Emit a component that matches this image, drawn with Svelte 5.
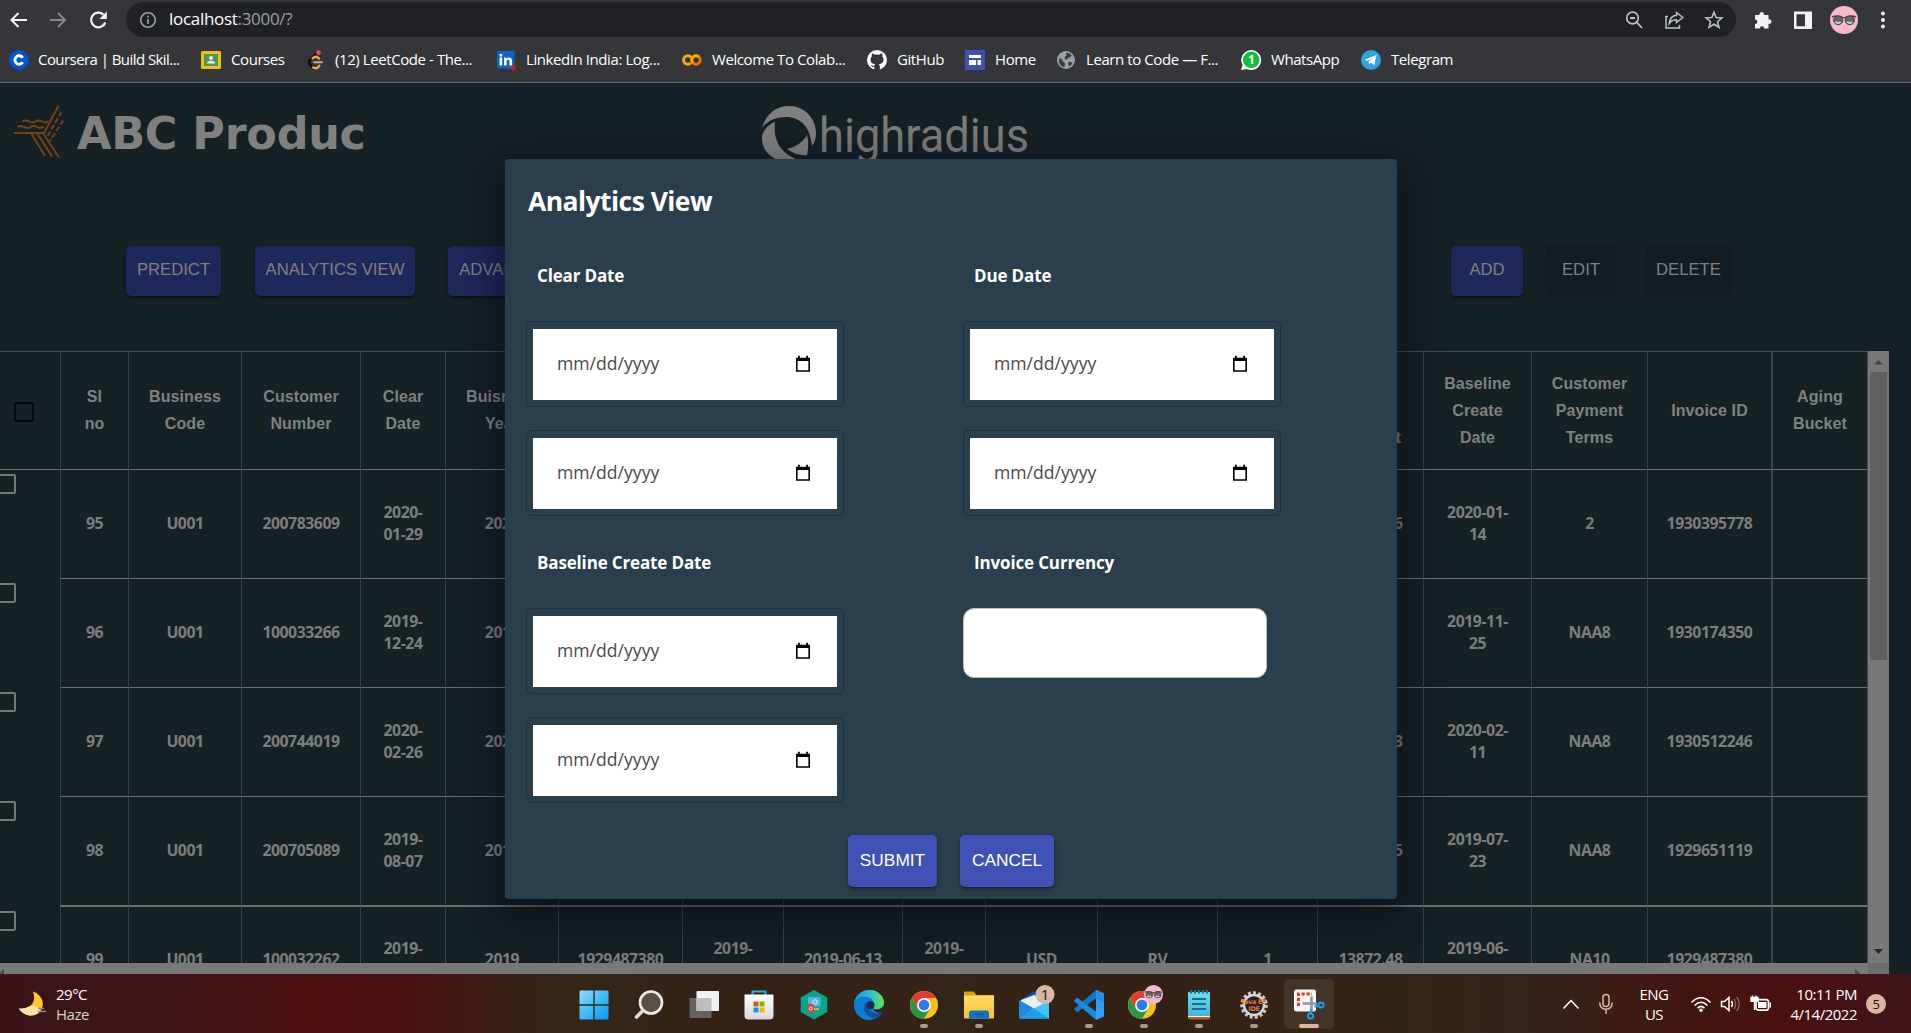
<script>
  const bookmarks = [
    { icon: 'coursera', label: 'Coursera | Build Skil...' },
    { icon: 'courses', label: 'Courses' },
    { icon: 'leetcode', label: '(12) LeetCode - The...' },
    { icon: 'linkedin', label: 'LinkedIn India: Log...' },
    { icon: 'colab', label: 'Welcome To Colab...' },
    { icon: 'github', label: 'GitHub' },
    { icon: 'home', label: 'Home' },
    { icon: 'globe', label: 'Learn to Code — F...' },
    { icon: 'whatsapp', label: 'WhatsApp' },
    { icon: 'telegram', label: 'Telegram' }
  ];

  const headers = [
    ['Sl', 'no'], ['Business', 'Code'], ['Customer', 'Number'], ['Clear', 'Date'],
    ['Buisness', 'Year'], ['Document', 'ID'], ['Posting', 'Date'], ['Document', 'Create', 'Date'],
    ['Due', 'Date'], ['Invoice', 'Currency'], ['Document', 'Type'], ['Posting', 'ID'],
    ['Total', 'Open', 'Amount'], ['Baseline', 'Create', 'Date'], ['Customer', 'Payment', 'Terms'],
    ['Invoice ID'], ['Aging', 'Bucket']
  ];

  const rows = [
    ['95', 'U001', '200783609', '2020-|01-29', '2020', '1930395778', '2020-|01-14', '2020-01-14', '2020-|01-29', 'USD', 'RV', '1', '54273.26', '2020-01-|14', '2', '1930395778', ''],
    ['96', 'U001', '100033266', '2019-|12-24', '2019', '1930174350', '2019-|11-25', '2019-11-25', '2019-|12-24', 'USD', 'RV', '1', '7196.41', '2019-11-|25', 'NAA8', '1930174350', ''],
    ['97', 'U001', '200744019', '2020-|02-26', '2020', '1930512246', '2020-|02-11', '2020-02-11', '2020-|02-26', 'USD', 'RV', '1', '16381.73', '2020-02-|11', 'NAA8', '1930512246', ''],
    ['98', 'U001', '200705089', '2019-|08-07', '2019', '1929651119', '2019-|07-23', '2019-07-23', '2019-|08-07', 'USD', 'RV', '1', '20417.35', '2019-07-|23', 'NAA8', '1929651119', ''],
    ['99', 'U001', '100032262', '2019-|06-28', '2019', '1929487380', '2019-|06-13', '2019-06-13', '2019-|06-28', 'USD', 'RV', '1', '13872.48', '2019-06-|13', 'NA10', '1929487380', '']
  ];

  const apps = [
    { name: 'start' }, { name: 'search' }, { name: 'taskview' }, { name: 'store' },
    { name: 'hex' }, { name: 'edge' }, { name: 'chrome', open: true },
    { name: 'folder', open: true }, { name: 'mail' }, { name: 'vscode', open: true },
    { name: 'chromeProfile', open: true }, { name: 'notepad', open: true },
    { name: 'java', open: true }, { name: 'snip', active: true }
  ];
</script>

{#snippet dateField()}
  <div class="date-frame">
    <div class="date-input">
      <span>mm/dd/yyyy</span>
      <svg width="16" height="18" viewBox="0 0 16 18">
        <path d="M1 2.700h14v14.100H1z M2.600 6v9.300h10.800V6z" fill="#000" fill-rule="evenodd" />
        <path d="M3 .8h1.800v3H3zM11.200 .8H13v3h-1.800z" fill="#000" />
      </svg>
    </div>
  </div>
{/snippet}

{#snippet glasses()}
  <g>
    <path d="M-12 -3 Q-6 -5.500 0 -2 Q6 -5.500 12 -3" fill="none" stroke="#5b444a" stroke-width="1.400" />
    <ellipse cx="-5.800" cy="0.300" rx="4.600" ry="4.300" fill="#5f676c" stroke="#4a3a3e" stroke-width="1" />
    <ellipse cx="5.800" cy="0.300" rx="4.600" ry="4.300" fill="#5f676c" stroke="#4a3a3e" stroke-width="1" />
    <path d="M-8.500 1.500 A3 3 0 0 0 -3.600 2M3.200 1.500 A3 3 0 0 0 8 2" fill="none" stroke="#c3ccd0" stroke-width="2" />
  </g>
{/snippet}

{#snippet chromeBall()}
  <circle cx="14" cy="14" r="14" fill="#fbc116" />
  <path d="M14 7h12.1A14 14 0 0 0 1.9 7L8 17.5z" fill="#e33b2e" />
  <path d="M1.9 7 A14 14 0 0 0 14 28 L20 17.5 L14 14 L8 17.5 Z" fill="#279847" />
  <circle cx="14" cy="14" r="6.9" fill="#fff" />
  <circle cx="14" cy="14" r="5.4" fill="#2f7bea" />
{/snippet}

{#snippet bookmarkIcon(kind)}
  <svg width="20" height="20" viewBox="0 0 20 20">
    {#if kind === 'coursera'}
      <circle cx="10" cy="10" r="10" fill="#0056d2" />
      <path d="M13.8 12.3 A4.3 4.3 0 1 1 13.8 7.7" fill="none" stroke="#fff" stroke-width="2.9" />
    {:else if kind === 'courses'}
      <rect width="20" height="18" y="1" rx="1.5" fill="#f6bc16" />
      <rect x="3" y="4" width="14" height="12" fill="#4c9a4f" />
      <circle cx="10" cy="8" r="1.900" fill="#fff" />
      <path d="M5.8 13.600c0-2 2.300-2.800 4.200-2.800s4.200.8 4.200 2.800z" fill="#e8f5ec" />
    {:else if kind === 'leetcode'}
      <path d="M12 3 5 10.200q-2 2.200 0 4.400l2.800 3" fill="none" stroke="#0b0b0b" stroke-width="2.600" stroke-linecap="round" />
      <path d="M7.500 8.400q2.600-3 5.400-.8l1.200 1M8 17.400q3.500 2.400 6.400-1.600" fill="none" stroke="#f4a63a" stroke-width="2.300" stroke-linecap="round" />
      <path d="M9 12.200h8" stroke="#b3b3b3" stroke-width="2" stroke-linecap="round" />
      <circle cx="13.500" cy="2.600" r="2.400" fill="#e0575b" />
    {:else if kind === 'linkedin'}
      <rect x="1" y="1" width="17.5" height="17.5" rx="1.2" fill="#0a66c2" />
      <path d="M3.6 7.6h2.6v8H3.6zM3.6 4h2.6v2.4H3.6zM8 7.6h2.5v1.2c1.5-2.2 5.6-1.6 5.6 2v4.8h-2.6v-4.2c0-2.4-2.9-2.2-2.9 0v4.2H8z" fill="#fff" />
      <circle cx="17.2" cy="17.4" r="2.5" fill="#e0121c" />
    {:else if kind === 'colab'}
      <circle cx="5.8" cy="10" r="4.2" fill="none" stroke="#f9ab00" stroke-width="3" stroke-dasharray="20 6.4" stroke-dashoffset="-3.2" />
      <circle cx="14" cy="10" r="4.2" fill="none" stroke="#e8710a" stroke-width="3" />
      <path d="M11 13 A4.2 4.2 0 0 1 17 7" fill="none" stroke="#f9ab00" stroke-width="3" />
    {:else if kind === 'github'}
      <circle cx="10" cy="10" r="10" fill="#fff" />
      <path d="M7.3 20v-3.2c-2.4.5-3-.8-3.6-1.9 1.7 0 1.8 1.4 3.7.9.1-.8.4-1.200.9-1.5-6.200-.9-5.200-6.300-3.500-7.800-.3-1-.2-2.100.2-3 1.300 0 2.200.7 2.900 1.200 1.400-.4 2.900-.4 4.300 0 .7-.5 1.600-1.200 2.900-1.200.4.900.5 2 .2 3 1.700 1.500 2.700 6.900-3.500 7.800.6.500 1 1.200 1 2.300V20z" fill="#35363a" />
    {:else if kind === 'home'}
      <rect width="20" height="20" fill="#3f51b5" />
      <path d="M4 5h12v3H4zM4 10h7v5H4zM12.500 10H16v5h-3.500z" fill="#fff" />
    {:else if kind === 'globe'}
      <circle cx="10" cy="10" r="9" fill="#9aa0a6" />
      <path d="M3.200 8.500c2 0 3.300.6 3.300 2.200s2.200 1 2.400 2.500-.6 2.200-.2 4.300c-3.500-.5-6.600-4-5.500-9zM10 2.800c3-.2 5 1.500 6 3.200-2 .1-1.500 2-3.300 1.800-1.600-.2-.8 2-2.400 1.900-1.500-.1-2.300-1.600-1.300-2.700s2.200-2.300 1-4.200zM12.500 12c1.800-.5 3 .4 3.800.9-.8 1.700-2 3-3.600 3.600.3-1.600-1.400-3.700-.2-4.500z" fill="#3c3e42" />
    {:else if kind === 'whatsapp'}
      <path d="M0 20l1.500-5A10 10 0 1 1 5.500 18.900z" fill="#fff" />
      <circle cx="10.200" cy="9.800" r="8.300" fill="#0fbf3f" />
      <text x="10.200" y="14" text-anchor="middle" class="wa-count">1</text>
    {:else if kind === 'telegram'}
      <circle cx="10" cy="10" r="10" fill="#2fa3de" />
      <path d="M3.500 9.800 15.500 5 13.300 15.200 9.800 12.600 7.900 14.400 7.600 11.400 12.500 7.300 6.300 11z" fill="#fff" />
    {/if}
  </svg>
{/snippet}

{#snippet appIcon(name)}
  <svg width="44" height="40" viewBox="-22 -20 44 40">
    <defs>
      <linearGradient id="g-start" x1="0" y1="0" x2="1" y2="1"><stop offset="0" stop-color="#8be0fd" /><stop offset=".5" stop-color="#3ebcfc" /><stop offset="1" stop-color="#0a93f5" /></linearGradient>
      <linearGradient id="g-store" x1="0" y1="0" x2="0" y2="1"><stop offset="0" stop-color="#fff" /><stop offset="1" stop-color="#d6d8db" /></linearGradient>
      <linearGradient id="g-edge" x1="0" y1="0" x2="1" y2="0"><stop offset="0" stop-color="#1f95d8" /><stop offset=".55" stop-color="#2fc2cf" /><stop offset="1" stop-color="#66e34c" /></linearGradient>
      <linearGradient id="g-folder" x1="0" y1="0" x2="0" y2="1"><stop offset="0" stop-color="#ffdc63" /><stop offset="1" stop-color="#fbc22d" /></linearGradient>
      <linearGradient id="g-note" x1="0" y1="0" x2="0" y2="1"><stop offset="0" stop-color="#76dcec" /><stop offset="1" stop-color="#43b5d6" /></linearGradient>
    </defs>
    {#if name === 'start'}
      <path d="M-13.500-14.500H-.7V-.7h-13.800v-12.800q0-1 1-1zM.7-14.500h12.800q1 0 1 1V-.7H.7zM-14.500.7H-.7v13.800h-12.800q-1 0-1-1zM.7.7h13.800v12.800q0 1-1 1H.7z" fill="url(#g-start)" />
    {:else if name === 'search'}
      <circle cx="2" cy="-2.500" r="11" fill="#5a5049" stroke="#eceded" stroke-width="2.600" />
      <path d="M-6 5.500-12.500 12" stroke="#dcdfe0" stroke-width="3.600" stroke-linecap="round" />
    {:else if name === 'taskview'}
      <rect x="-14.500" y="-7" width="22" height="20" rx="1" fill="#66625f" />
      <rect x="-7.500" y="-14" width="22.500" height="20" rx="1" fill="#f2f2f2" />
      <rect x="-7.500" y="-7" width="15" height="13" fill="#bfbebd" />
    {:else if name === 'store'}
      <path d="M-6.500-9v-4.500h13V-9" fill="none" stroke="#2cabe8" stroke-width="2" />
      <path d="M-14.500-10.500h29v21q0 4-4 4h-21q-4 0-4-4z" fill="url(#g-store)" />
      <path d="M-5.500-3.500h5v5h-5z" fill="#ef4f22" /><path d="M.6-3.500h5v5h-5z" fill="#7fb800" />
      <path d="M-5.500 2.500h5v5h-5z" fill="#00a2ed" /><path d="M.6 2.500h5v5h-5z" fill="#fdb900" />
    {:else if name === 'hex'}
      <path d="M0-15 13.300-7.500V7L0 14.500-13.300 7V-7.500z" fill="#06a58d" />
      <rect x="-6" y="-8" width="12.500" height="9.500" fill="#56b3d8" />
      <circle cx="1" cy="-3" r="2.300" fill="none" stroke="#e8f5f8" stroke-width="1" />
      <path d="M-1 3h7v4h-7z" fill="#5a8f35" /><path d="M0 3.500h5v1.200H0z" fill="#bfe0e0" />
      <rect x="-6.500" y="-1" width="6.500" height="8.500" fill="#e0443e" /><circle cx="-3.200" cy="3.500" r="1.500" fill="none" stroke="#fff" stroke-width=".8" />
    {:else if name === 'edge'}
      <circle r="15" fill="#0c7fd4" />
      <path d="M-15-1C-14-10-7-15.200 1-15c8 .2 14 6 14 12.500 0 4.500-3.500 7-7.500 7-3 0-4-1-4-2.200 0-1 1.300-1.500 1.300-4C4.800-5.500.5-8.500-5-8.500S-14-5-15-1z" fill="url(#g-edge)" />
      <path d="M-3-2.500C-7 2 -5 12 6 13.700 10 12 13 8.500 13.200 7.500 8 9.500-1.500 8.500-3-2.500z" fill="#124f9c" />
      <circle cx="1.500" cy=".3" r="4" fill="#172f45" />
      <path d="M3.500 2.300Q4.500 5 9 4.300 13 3.700 14.700 0L15.500 6 12 7.500Q6 9 3.500 2.300z" fill="#33231a" />
    {:else if name === 'chrome'}
      <g transform="translate(-14,-14)">{@render chromeBall()}</g>
    {:else if name === 'folder'}
      <path d="M-15-12.500q0-1 1-1h8.500l3 3.500H14q1 0 1 1v6h-30z" fill="#e0a000" />
      <rect x="-15" y="-9.500" width="30" height="23" rx="1" fill="url(#g-folder)" />
      <path d="M-10 13.500V8q0-2.500 2.500-2.500h15Q10 5.500 10 8v5.500z" fill="#0f73c9" />
      <path d="M-5 9.300H5" stroke="#084f91" stroke-width="1.300" />
    {:else if name === 'mail'}
      <path d="M-15-4 0-14 15-4V4h-30z" fill="#0d4f9e" />
      <path d="M-13-5 0-10 13-5V4L0 8-13 2z" fill="#eceff2" />
      <path d="M-15-5 0 3.500-15 13.500z" fill="#1c8be0" />
      <path d="M15-4.500V13.500h-30L0 3.500z" fill="#3cc6f5" />
      <path d="M-15 13.500 0 3.500 15 13.500z" fill="#1f9ceb" />
      <circle cx="11" cy="-10.500" r="9.500" fill="#dbb6a3" />
      <text x="11" y="-5" text-anchor="middle" class="badge-text">1</text>
    {:else if name === 'vscode'}
      <path d="M7-15 15-11.500V11.500L7 15z" fill="#2f9df0" />
      <path d="M7-15-15 4l3 3.500L7-6.500z" fill="#1478c8" />
      <path d="M7 15-15-4l3-3.500L7 6.500z" fill="#1a8ae0" />
      <path d="M7-15 15-11.500V-2L7-6z" fill="#2590e6" />
    {:else if name === 'chromeProfile'}
      <g transform="translate(-16,-14)">{@render chromeBall()}</g>
      <circle cx="9.500" cy="-10.500" r="9.500" fill="#f6b6cb" />
      <g transform="translate(9.500,-10.500) scale(.72)">{@render glasses()}</g>
    {:else if name === 'notepad'}
      <path d="M-11-12h22V12.500q0 2-2 2h-18q-2 0-2-2z" fill="#b8601c" />
      <path d="M-11-11.500h22V12h-22z" fill="#f2f2f2" />
      <rect x="-11" y="-13" width="22" height="24" fill="url(#g-note)" />
      <path d="M-7-6H7M-7-1H7M-7 4H7" stroke="#0d6f93" stroke-width="1.800" />
      <path d="M-8-15v3.500M-4-15v3.500M0-15v3.500M4-15v3.500M8-15v3.500" stroke="#0e7a90" stroke-width="2.200" />
    {:else if name === 'java'}
      <circle r="12.300" fill="none" stroke="#c9c9c9" stroke-width="3" stroke-dasharray="3 2.150" />
      <circle r="10" fill="#25202e" stroke="#d6d6d6" stroke-width="2.400" />
      <text x="0" y="-1" text-anchor="middle" class="java-text">Java EE</text>
      <text x="0" y="5.500" text-anchor="middle" class="java-text">IDE</text>
    {:else if name === 'snip'}
      <rect x="-15" y="-15.500" width="22" height="22" rx="2.500" fill="#f3f5f7" />
      <path d="M-10.500 1v-12H3" fill="none" stroke="#dd4014" stroke-width="3" stroke-dasharray="3.200 1.800" />
      <path d="M2.500-8.500V6M-6.500-1.500H8" stroke="#8f989f" stroke-width="2.600" />
      <circle cx="12" cy="0" r="2.600" fill="none" stroke="#1f9ce6" stroke-width="2" />
      <circle cx="1.500" cy="11" r="2.600" fill="none" stroke="#1f9ce6" stroke-width="2" />
      <path d="M9.800 1 5.500 1.500M1.800 8.500 2.300 4" stroke="#1f9ce6" stroke-width="2.200" />
    {/if}
  </svg>
{/snippet}

<div class="screen">
  <header class="browser">
    <div class="nav-row">
      <div class="nav-icons">
        <svg width="20" height="20" viewBox="0 0 20 20"><path d="M19 10H3M10.500 3 3.500 10l7 7" fill="none" stroke="#f1f3f4" stroke-width="2" /></svg>
        <svg width="20" height="20" viewBox="0 0 20 20"><path d="M2 10h15M10 3l7 7-7 7" fill="none" stroke="#85878b" stroke-width="2" /></svg>
        <svg width="20" height="20" viewBox="0 0 20 20"><path d="M17.300 12.500A7.300 7.300 0 1 1 15.500 4.700" fill="none" stroke="#f1f3f4" stroke-width="2.300" /><path d="M18.800 1.500V9h-7.500z" fill="#f1f3f4" /></svg>
      </div>
      <div class="address">
        <svg width="18" height="18" viewBox="0 0 18 18"><circle cx="9" cy="9" r="7.300" fill="none" stroke="#9aa0a6" stroke-width="1.600" /><path d="M9 8v5M9 4.800v1.800" stroke="#9aa0a6" stroke-width="1.700" /></svg>
        <span class="url">localhost<i>:3000/?</i></span>
        <div class="address-tools">
          <svg width="20" height="20" viewBox="0 0 20 20"><circle cx="8.500" cy="8" r="5.800" fill="none" stroke="#bdc1c6" stroke-width="1.700" /><path d="M13 12.500 18 18M6 8h5" stroke="#bdc1c6" stroke-width="1.800" /></svg>
          <svg width="20" height="20" viewBox="0 0 20 20"><path d="M4 6.500H2V18h13.500v-3" fill="none" stroke="#bdc1c6" stroke-width="1.500" /><path d="M12.500 2.500 18.800 7.500 12.500 12.500V9.700C9 9.700 7 11 5.200 13.500 5.700 9 8 5.800 12.500 5.300z" fill="none" stroke="#bdc1c6" stroke-width="1.500" /></svg>
          <svg width="20" height="20" viewBox="0 0 20 20"><path d="M10 2.300 12.200 7.600 17.900 8 13.500 11.700 14.900 17.300 10 14.200 5.100 17.300 6.500 11.700 2.100 8 7.800 7.600z" fill="none" stroke="#bdc1c6" stroke-width="1.600" /></svg>
        </div>
      </div>
      <div class="ext-icons">
        <svg width="20" height="20" viewBox="0 0 20 20"><path d="M2 5h4.500a2.300 2.300 0 1 1 4.400 0H15.500V9.400a2.300 2.300 0 1 1 0 4.400V18.500H11.300a2.300 2.300 0 1 0-4.600 0H2v-4.400a2.300 2.300 0 1 0 0-4.700z" fill="#f1f3f4" /></svg>
        <svg width="20" height="20" viewBox="0 0 20 20"><path d="M1 1.500h18v17.500H1zM3.500 4.300v12h8.500v-12z" fill="#f1f3f4" fill-rule="evenodd" /></svg>
        <svg width="28" height="28" viewBox="-14 -14 28 28"><circle r="14" fill="#f8b9cd" />{@render glasses()}</svg>
        <svg width="8" height="20" viewBox="0 0 8 20"><circle cx="4" cy="3.500" r="2" fill="#f1f3f4" /><circle cx="4" cy="10" r="2" fill="#f1f3f4" /><circle cx="4" cy="16.500" r="2" fill="#f1f3f4" /></svg>
      </div>
    </div>
    <nav class="bookmarks">
      {#each bookmarks as mark}
        <div class="bookmark">{@render bookmarkIcon(mark.icon)}<span>{mark.label}</span></div>
      {/each}
    </nav>
  </header>

  <main class="page">
    <div class="brands">
      <svg class="brand-abc" width="360" height="54" viewBox="0 0 360 54">
        <g fill="none" stroke="#754214" stroke-width="2">
          <path d="M44.400 0 30 27H0" />
          <path d="M8.500 15.500q3-2 6.500 0t6.500 0 6.500 0 6.500-.5M3.500 21q3-2 6.500 0t6.500 0 6.500 0 6.500-.5" />
          <path d="M47.500 6 33 31M49 14.500 36 35" stroke-dasharray="5 2.500" />
          <path d="M17 27 31 50M23 27 38 50.500M29 27 45 51.500" />
        </g>
        <text x="63" y="43" textLength="289" class="abc-text">ABC Produc</text>
      </svg>
      <svg class="brand-hr" width="270" height="64" viewBox="0 0 270 64">
        <path d="M0 22C4 8 14 0 27 0 43 0 54 13 54 27 54 32 53 36 50 40 48 20 38 11 24 11 12 11 4 16 0 22z" fill="#808080" />
        <path d="M13 16C11 32 17 46 34 53 16 60 0 48 0 32 0 26 5 19 13 16z" fill="#808080" />
        <path d="M45 29C47 38 46 44 45 49 38 50 31 47 25 43 34 41 41 36 45 29z" fill="#808080" />
        <text x="57" y="45.500" textLength="210" lengthAdjust="spacingAndGlyphs" class="hr-text">highradius</text>
      </svg>
    </div>

    <div class="actions">
      <div class="group">
        <button class="btn dim predict">PREDICT</button>
        <button class="btn dim analytics">ANALYTICS VIEW</button>
        <button class="btn dim advance">ADVANCE SEARCH</button>
      </div>
      <div class="group">
        <button class="btn dim add">ADD</button>
        <button class="btn off edit">EDIT</button>
        <button class="btn off delete">DELETE</button>
      </div>
    </div>

    <div class="grid-wrap">
      <div class="grid-view">
        <div class="row head">
          <div class="check-cell"><i class="box dark"></i></div>
          {#each headers as lines}
            <div class="cell">{#each lines as line}<span>{line}</span>{/each}</div>
          {/each}
        </div>
        {#each rows as row}
          <div class="row">
            <div class="check-cell"><i class="box"></i></div>
            {#each row as value}
              <div class="cell">{#each value.split('|') as line}<span>{line}</span>{/each}</div>
            {/each}
          </div>
        {/each}
      </div>
      <div class="vbar">
        <svg width="21" height="21" viewBox="0 0 21 21"><path d="M6 13.500 10.500 9 15 13.500z" fill="#484848" /></svg>
        <div class="thumb"></div>
        <svg class="down" width="21" height="21" viewBox="0 0 21 21"><path d="M6 8 15 8 10.500 13z" fill="#262626" /></svg>
      </div>
    </div>
    <div class="hbar">
      <svg width="6" height="11" viewBox="0 0 6 11"><path d="M4 5.500V11H0V10z" fill="#4b4b4b" /></svg>
      <svg class="right" width="6" height="11" viewBox="0 0 6 11"><path d="M0 5.500 5.500 11H0z" fill="#4b4b4b" /></svg>
      <div class="corner"></div>
    </div>
  </main>

  <section class="modal">
    <h2>Analytics View</h2>
    <div class="fields">
      <div class="field"><h3>Clear Date</h3>{@render dateField()}{@render dateField()}</div>
      <div class="field"><h3>Due Date</h3>{@render dateField()}{@render dateField()}</div>
      <div class="field"><h3>Baseline Create Date</h3>{@render dateField()}{@render dateField()}</div>
      <div class="field"><h3>Invoice Currency</h3><div class="text-input"></div></div>
    </div>
    <div class="modal-actions">
      <button class="btn solid submit">SUBMIT</button>
      <button class="btn solid cancel">CANCEL</button>
    </div>
  </section>

  <footer class="taskbar">
    <div class="weather">
      <svg width="30" height="28" viewBox="0 0 30 28">
        <path d="M15 1.500C25 5 27.500 15 22 21.500 17 27.500 6 27 1 18.500 12 19 19 13 15 1.500z" fill="#ffc928" />
        <path d="M1 18.500c7 1 9-2.500 14-2.500s6 3 8 4.500c-5 7-17 7-22-2z" fill="#fbe6a8" />
        <path d="M20 18.500h6M20 21.500h8" stroke="#9a8480" stroke-width="1.500" />
      </svg>
      <div><span>29°C</span><span class="soft">Haze</span></div>
    </div>
    <div class="apps">
      {#each apps as app}
        <div class="app" class:active={app.active}>
          {@render appIcon(app.name)}
          {#if app.open || app.active}<i class="mark"></i>{/if}
        </div>
      {/each}
    </div>
    <div class="tray">
      <svg class="chev" width="18" height="12" viewBox="0 0 18 12"><path d="M1.500 10.500 9 2.500 16.500 10.500" fill="none" stroke="#fff" stroke-width="1.500" /></svg>
      <svg class="mic" width="16" height="22" viewBox="0 0 16 22"><rect x="5" y="1.500" width="6" height="12" rx="3" fill="none" stroke="#dbb6a3" stroke-width="1.500" /><path d="M1.700 9.500q.3 6.700 6.300 6.700t6.300-6.700M8 16.500V21" fill="none" stroke="#dbb6a3" stroke-width="1.500" /></svg>
      <div class="lang"><span>ENG</span><span>US</span></div>
      <svg class="wifi" width="22" height="18" viewBox="0 0 22 18"><path d="M1.500 7.500Q11-2 20.500 7.500M4.500 10.500Q11 4 17.500 10.500M7.500 13.300Q11 9.500 14.500 13.300" fill="none" stroke="#fff" stroke-width="1.600" /><circle cx="11" cy="15.300" r="1.800" fill="#fff" /></svg>
      <svg class="vol" width="22" height="18" viewBox="0 0 22 18"><path d="M1.500 6.500h3L9 2.500v13L4.500 11.500h-3z" fill="none" stroke="#fff" stroke-width="1.500" /><path d="M11.500 6q2 3 0 6" fill="none" stroke="#fff" stroke-width="1.500" /><path d="M14 4q3.500 5 0 10M16.700 2q5 7 0 14" fill="none" stroke="#7d6a66" stroke-width="1.300" /></svg>
      <svg class="bat" width="22" height="18" viewBox="0 0 22 18"><rect x="6" y="4.700" width="12.500" height="10.500" rx="2.500" fill="none" stroke="#fff" stroke-width="1.700" /><rect x="8" y="7" width="8.500" height="6" fill="#fff" /><path d="M19.500 7.500h1.500v5h-1.500z" fill="#fff" /><path d="M1 2.500h7v3.800H1zM2.500 .5v2.500M6 .5v2.500M4.500 6V15" fill="#fff" stroke="#fff" stroke-width="1.400" /></svg>
      <div class="clock"><span>10:11 PM</span><span>4/14/2022</span></div>
      <div class="count">5</div>
    </div>
  </footer>
</div>

<style>
  :global(body) { background: #162126; overflow: hidden; }
  .screen {
    position: relative;
    display: flex;
    flex-direction: column;
    width: 1911px;
    height: 1033px;
    overflow: hidden;
    font-family: "Open Sans", "Noto Sans", sans-serif;
    color: #fff;
  }
  svg { display: block; flex: none; overflow: visible; }
  i { font-style: normal; }

  .browser { height: 82px; flex: none; background: #35363a; border-bottom: 1px solid #636569; }
  .nav-row { display: flex; align-items: center; height: 35px; padding-top: 2px; }
  .nav-icons { display: flex; gap: 20px; width: 118px; padding-left: 8px; flex: none; box-sizing: content-box; }
  .address {
    display: flex;
    align-items: center;
    width: 1610px;
    height: 35px;
    padding-left: 13px;
    box-sizing: border-box;
    border-radius: 18px;
    background: #202124;
  }
  .url { margin-left: 12px; font-size: 17px; letter-spacing: -0.3px; line-height: 24px; padding-bottom: 1px; }
  .url i { color: #9aa0a6; }
  .address-tools { display: flex; gap: 20px; margin-left: auto; padding-right: 12px; }
  .ext-icons { display: flex; align-items: center; gap: 20px; padding-left: 17px; }
  .ext-icons svg:nth-child(3) { margin-left: -3px; }
  .ext-icons svg:nth-child(4) { margin-left: 1px; }

  .bookmarks {
    display: grid;
    grid-template-columns: 192px 104px 191px 186px 185px 98px 91px 185px 120px 120px;
    height: 45px;
    padding-left: 9px;
    align-items: center;
  }
  .bookmark { display: flex; align-items: center; gap: 10px; font-size: 15px; letter-spacing: -0.42px; white-space: nowrap; }
  .bookmark span { padding-bottom: 2px; }
  .bookmark:first-child span { margin-left: -1px; letter-spacing: -0.56px; }
  .wa-count { font: 700 12px "Open Sans", sans-serif; fill: #fff; }

  .page { display: flex; flex-direction: column; height: 891px; background: #162126; }
  .brands { display: flex; height: 163px; padding: 23px 0 0 14px; box-sizing: border-box; }
  .brand-hr { margin-left: 388px; }
  .abc-text { font: 700 44.500px "DejaVu Sans", sans-serif; fill: #808080; }
  .hr-text { font: 400 49px Roboto, sans-serif; fill: #7c7c7c; }

  .actions { display: flex; justify-content: space-between; padding: 0 179px 0 126px; height: 105px; }
  .group { display: flex; align-items: flex-start; }
  .btn {
    height: 50px;
    padding: 0 0 2px;
    border: 0;
    border-radius: 5px;
    font: 400 16.700px "Liberation Sans", Arial, sans-serif;
    white-space: nowrap;
    color: #808080;
  }
  .dim { background: #1f285a; box-shadow: 0 3px 2px -2px rgba(0,0,0,.4), 0 2px 3px rgba(0,0,0,.3); }
  .off { background: #141c23; }
  .predict { width: 95px; }
  .analytics { width: 160px; margin-left: 34px; }
  .advance { width: 176px; margin-left: 33px; }
  .add { width: 72px; }
  .edit { width: 72px; margin-left: 22px; }
  .delete { width: 87px; margin-left: 28px; }

  .grid-wrap { display: flex; height: 612px; overflow: hidden; }
  .grid-view { width: 1868px; height: 612px; overflow: hidden; border-top: 1px solid #37515a; box-sizing: border-box; flex: none; }
  .row {
    display: grid;
    grid-template-columns: 60px 68px 113px 119px 85px 113px 124px 101px 119px 83px 112px 120px 100px 106px 108px 116px 124px 97px;
    height: 109px;
  }
  .cell {
    display: flex;
    flex-direction: column;
    align-items: center;
    justify-content: center;
    padding-bottom: 2px;
    border-left: 1px solid #304951;
    border-bottom: 1px solid #6e6e6e;
    font-size: 15.800px;
    font-weight: 700;
    letter-spacing: -0.45px;
    line-height: 22.500px;
    color: #7d7d7d;
  }
  .row:nth-child(5) { height: 110px; }
  .row:nth-child(5) .cell { border-bottom-width: 2px; }
  .row:nth-child(6) .cell { padding-bottom: 4px; }
  .cell:last-child { border-left-width: 2px; border-right: 1px solid #37515a; }
  .head { height: 118px; }
  .head .cell { padding-bottom: 1px; font: 700 16px/27px "Liberation Sans", Arial, sans-serif; letter-spacing: 0.1px; color: #808080; }
  .head .check-cell { border-bottom: 1px solid #6e6e6e; padding: 50px 0 0 14px; }
  .check-cell { padding-top: 4px; }
  .box { display: block; width: 16px; height: 16px; margin-left: -4px; border: 2px solid #777; border-radius: 2px; }
  .box.dark { margin-left: 0; border-color: #05080a; }

  .vbar { display: flex; flex-direction: column; width: 21px; background: #787878; flex: none; }
  .thumb { width: 17px; height: 288px; margin: 0 auto; background: #616161; }
  .down { margin-top: auto; margin-bottom: 1px; }
  .hbar { display: flex; width: 1889px; height: 11px; background: #787878; overflow: hidden; }
  .hbar .right { margin-left: auto; margin-right: 7px; }
  .corner { width: 21px; background: #6c6c6c; }

  .modal {
    position: absolute;
    left: 505px;
    top: 159px;
    width: 892px;
    height: 740px;
    box-sizing: border-box;
    padding: 22px 0 0 21px;
    border-radius: 4px;
    background: #2b3e4b;
    box-shadow: 0 11px 15px -7px rgba(0,0,0,.25), 0 24px 38px 3px rgba(12,8,24,.2), 0 9px 46px 8px rgba(12,8,24,.3);
  }
  h2 { margin: 0 0 0 2px; font-size: 26.500px; line-height: 40px; letter-spacing: -0.55px; font-weight: 700; }
  .fields { display: grid; grid-template-columns: 437px 400px; margin-top: 43px; grid-template-rows: 287px 268px; }
  h3 { margin: 0 0 33px 11px; font-size: 17px; line-height: 24px; font-weight: 700; letter-spacing: -0.15px; }
  .date-frame { width: 318px; height: 86px; padding: 7px 6px; margin-bottom: 23px; border: 1px solid #1f303c; border-radius: 5px; box-sizing: border-box; }
  .date-input { display: flex; align-items: center; justify-content: space-between; width: 304px; height: 71px; padding: 0 26px 2px 24px; background: #fff; box-sizing: border-box; }
  .date-input span { padding-bottom: 2px; color: #4a4a4a; font-size: 17.600px; font-weight: 400; }
  .text-input { width: 304px; height: 70px; box-sizing: border-box; border: 1px solid #b9bec2; border-radius: 11px; background: #fff; }
  .modal-actions { display: flex; gap: 23px; margin: 16px 0 0 322px; }
  .solid { height: 52px; font-size: 17.300px; background: #3f51b5; color: #fff; box-shadow: 0 3px 2px -2px rgba(0,0,0,.3), 0 2px 5px rgba(0,0,0,.3); }
  .submit { width: 89px; }
  .cancel { width: 94px; }

  .taskbar {
    display: flex;
    height: 59px;
    background: linear-gradient(90deg, #391519 0, #3e1518 180px, #4c100f 300px, #4a1110 400px, #3a2017 500px, #332617 600px, #352016 770px, #332517 950px, #342015 1130px, #332516 1400px, #36221a 1540px, #43150f 1700px, #4a1011 1800px, #3e151a 1911px);
    font-size: 15px;
    letter-spacing: -0.5px;
    line-height: 20px;
  }
  .weather { display: flex; align-items: center; width: 548px; padding-left: 18px; gap: 8px; }
  .weather div, .clock, .lang { display: flex; flex-direction: column; }
  .soft { color: #d8cfcf; }
  .apps { display: flex; flex: none; }
  .app { position: relative; display: flex; justify-content: center; width: 55px; height: 59px; padding-top: 11px; box-sizing: border-box; }
  .app.active { width: 50px; height: 50px; margin: 5px 0 0 3px; padding-top: 6px; border-radius: 5px; background: rgba(255,255,255,.08); }
  .mark { position: absolute; bottom: 5px; left: 50%; width: 8px; height: 4px; margin-left: -4px; border-radius: 2px; background: #a39b97; }
  .active .mark { bottom: 1px; width: 20px; margin-left: -10px; background: #dbb6a3; }
  .badge-text { font: 400 15px "Open Sans", sans-serif; fill: #111; letter-spacing: 0; }
  .java-text { font: 700 6.500px "DejaVu Sans", sans-serif; fill: #e07b22; letter-spacing: -0.3px; }
  .tray { display: flex; align-items: center; margin-left: auto; padding-right: 25px; }
  .mic { margin-left: 18px; }
  .lang { width: 40px; margin-left: 20px; align-items: center; }
  .wifi { margin-left: 16px; }
  .vol { margin-left: 8px; }
  .bat { margin-left: 8px; }
  .clock { width: 76px; margin-left: 9px; align-items: flex-end; text-align: right; white-space: nowrap; }
  .count { width: 20px; height: 20px; margin-left: 9px; border-radius: 50%; background: #dbb6a3; color: #111; font-size: 13px; line-height: 20px; text-align: center; }
</style>
